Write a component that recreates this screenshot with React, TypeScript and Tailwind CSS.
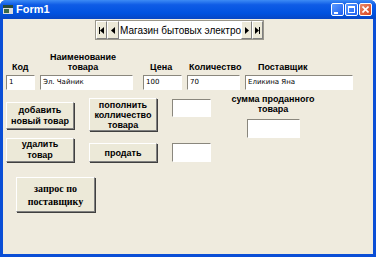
import React from "react";

const sans = { fontFamily: '"Liberation Sans", Arial, sans-serif' };

function Btn({ lines, className = "", serif = false }: { lines: string[]; className?: string; serif?: boolean }) {
  return (
    <div
      className={`flex flex-col items-center justify-center border border-t-white border-l-white border-b-[#808080] border-r-[#808080] bg-[#ece9d8] text-center font-bold whitespace-nowrap text-black shadow-[1px_1px_0_#404040] ${className}`}
      style={serif ? { fontFamily: '"Liberation Serif", "Times New Roman", serif' } : sans}
    >
      {lines.map((l) => (
        <span key={l}>{l}</span>
      ))}
    </div>
  );
}

function Box({ value = "", className = "" }: { value?: string; className?: string }) {
  return (
    <div
      className={`border border-t-[#8a877d] border-l-[#8a877d] border-b-white border-r-white bg-white pl-[2px] text-[7px] leading-[12px] text-black ${className}`}
      style={{ fontFamily: '"DejaVu Sans", sans-serif' }}
    >
      {value}
    </div>
  );
}

function Tri({ dir }: { dir: "l" | "r" }) {
  return (
    <svg width="4" height="7" viewBox="0 0 4 7">
      {dir === "l" ? <polygon points="4,0 4,7 0,3.5" fill="#000" /> : <polygon points="0,0 0,7 4,3.5" fill="#000" />}
    </svg>
  );
}

function NavBtn({ children }: { children: React.ReactNode }) {
  return (
    <div className="flex h-full items-center justify-center border border-t-white border-l-white border-b-[#808080] border-r-[#808080] bg-[#ece9d8]">
      {children}
    </div>
  );
}

function TitleBtn({ kind }: { kind: "min" | "max" | "close" }) {
  const bg =
    kind === "close"
      ? "bg-[linear-gradient(135deg,#e98a6a,#d8431f)]"
      : "bg-[linear-gradient(135deg,#5b9bff,#1c5ef0)]";
  return (
    <div className={`flex h-[13px] w-[13px] items-center justify-center rounded-[2px] border border-white ${bg}`}>
      {kind === "min" && <div className="mt-[6px] ml-[-3px] h-[2px] w-[4px] bg-white" />}
      {kind === "max" && <div className="h-[7px] w-[7px] border border-t-2 border-white" />}
      {kind === "close" && (
        <svg width="7" height="7" viewBox="0 0 7 7">
          <path d="M0.5 0.5 L6.5 6.5 M6.5 0.5 L0.5 6.5" stroke="#fff" strokeWidth="1.6" />
        </svg>
      )}
    </div>
  );
}

export default function App() {
  return (
    <div className="h-[258px] w-[378px] overflow-hidden bg-white" style={sans}>
      <div className="flex h-[257px] w-[376px] flex-col rounded-t-[6px] bg-[#0a4ed6]">
        {/* title bar */}
        <div className="flex h-[19px] items-center rounded-t-[6px] bg-[linear-gradient(180deg,#3d8bf5_0%,#0f5ce6_25%,#0052e0_70%,#0746c4_100%)] pr-[4px] pl-[3px]">
          <svg width="10" height="9" viewBox="0 0 10 9">
            <rect x="0" y="0" width="10" height="9" fill="#dcdcdc" />
            <rect x="0" y="0" width="10" height="3" fill="#2a4a3a" />
            <rect x="1" y="4" width="5" height="4" fill="#3a6a4a" />
          </svg>
          <span className="ml-[3px] text-[11px] font-bold text-white">Form1</span>
          <div className="ml-auto flex gap-[1px]">
            <TitleBtn kind="min" />
            <TitleBtn kind="max" />
            <TitleBtn kind="close" />
          </div>
        </div>
        {/* client */}
        <div className="mx-[3px] mb-[3px] flex flex-1 flex-col bg-[#efebde]">
          {/* navigator */}
          <div className="mt-[1px] ml-[92px] flex h-[20px] w-[169px] border border-[#9a978c] bg-[#ece9d8]">
            <div className="w-[11px]">
              <NavBtn>
                <div className="flex items-center">
                  <div className="h-[7px] w-[1px] bg-black" />
                  <Tri dir="l" />
                </div>
              </NavBtn>
            </div>
            <div className="w-[12px]">
              <NavBtn>
                <Tri dir="l" />
              </NavBtn>
            </div>
            <div className="flex flex-1 items-center overflow-hidden bg-white pl-[1px] text-[10px] whitespace-nowrap text-black">
              Магазин бытовых электро
            </div>
            <div className="w-[11px]">
              <NavBtn>
                <Tri dir="r" />
              </NavBtn>
            </div>
            <div className="w-[11px]">
              <NavBtn>
                <div className="flex items-center">
                  <Tri dir="r" />
                  <div className="h-[7px] w-[1px] bg-black" />
                </div>
              </NavBtn>
            </div>
          </div>

          {/* labels */}
          <div className="mt-[12px] flex h-[20px] items-end text-[9px] leading-[10px] font-bold whitespace-nowrap text-black">
            <div className="ml-[9px] w-[17px]">Код</div>
            <div className="ml-[21px] w-[66px] text-center">
              Наименование
              <br />
              товара
            </div>
            <div className="ml-[34px] w-[30px]">Цена</div>
            <div className="ml-[9px] w-[56px]">Количество</div>
            <div className="ml-[13px]">Поставщик</div>
          </div>

          {/* inputs */}
          <div className="mt-[3px] flex h-[15px]">
            <Box value="1" className="ml-[3px] w-[29px]" />
            <Box value="Эл. Чайник" className="ml-[5px] w-[93px]" />
            <Box value="100" className="ml-[10px] w-[39px]" />
            <Box value="70" className="ml-[5px] w-[53px]" />
            <Box value="Еликина Яна" className="ml-[5px] w-[108px]" />
          </div>

          {/* middle */}
          <div className="mt-[4px] flex items-start text-[9px] leading-[10px]">
            <div className="ml-[3px] flex w-[68px] flex-col">
              <Btn lines={["добавить", "новый товар"]} className="mt-[8px] h-[27px] leading-[11px]" />
              <Btn lines={["удалить", "товар"]} className="mt-[9px] h-[24px] leading-[11px]" />
            </div>
            <div className="ml-[15px] flex w-[68px] flex-col">
              <Btn lines={["пополнить", "колличество", "товара"]} className="mt-[4px] h-[33px] leading-[10px]" />
              <Btn lines={["продать"]} className="mt-[12px] h-[19px]" />
            </div>
            <div className="ml-[15px] flex w-[39px] flex-col">
              <Box className="mt-[5px] h-[18px]" />
              <Box className="mt-[26px] h-[19px]" />
            </div>
            <div className="ml-[20px] flex w-[84px] flex-col items-center font-bold whitespace-nowrap text-black">
              <div className="text-center">
                сумма проданного
                <br />
                товара
              </div>
              <Box className="mt-[5px] h-[19px] w-[53px]" />
            </div>
          </div>

          {/* bottom button */}
          <Btn lines={["запрос по", "поставщику"]} serif className="mt-[15px] ml-[13px] h-[35px] w-[79px] text-[10px] leading-[13px]" />
        </div>
      </div>
    </div>
  );
}
